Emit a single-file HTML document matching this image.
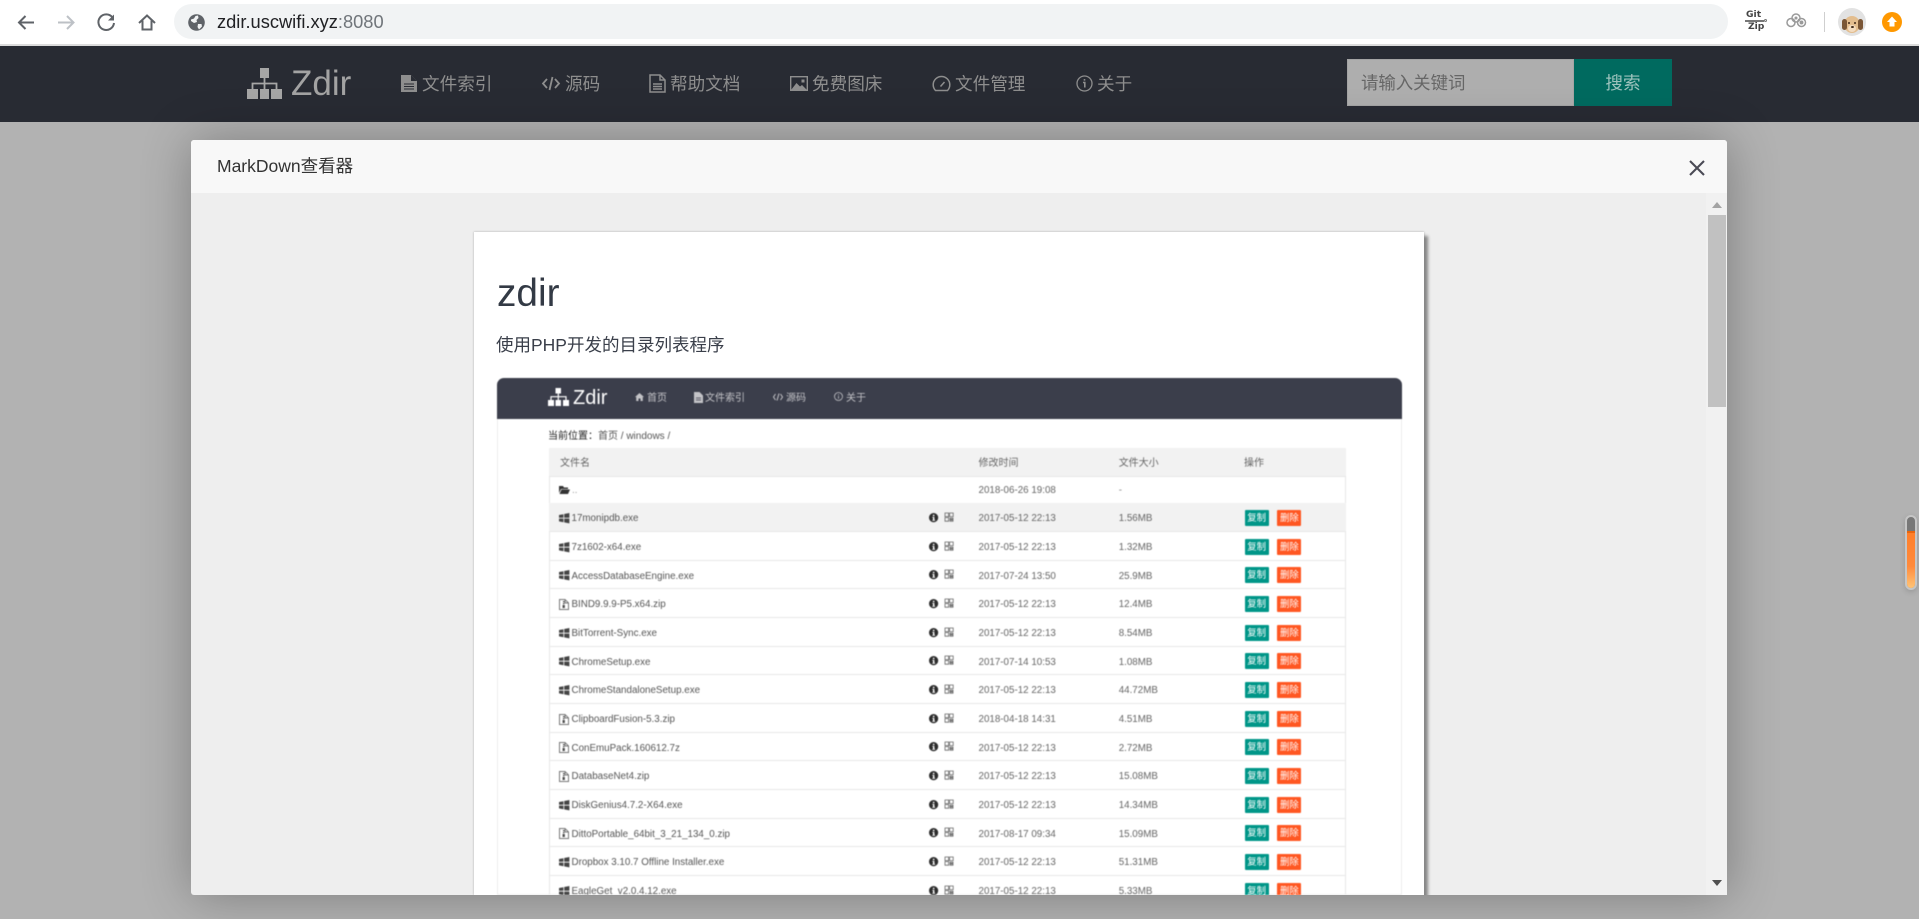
<!DOCTYPE html>
<html lang="zh"><head><meta charset="utf-8"><title>Zdir</title>
<style>
*{box-sizing:border-box}
html,body{margin:0;padding:0;width:1919px;height:919px;overflow:hidden;background:#b2b2b2;font-family:"Liberation Sans","Noto Sans CJK SC",sans-serif}
.a,.a>*{position:absolute}
.a{left:0;top:0}
svg{position:absolute;overflow:visible}
.nt{position:absolute;top:71px;line-height:26px;font-size:17.6px;color:#8e8e8e;white-space:nowrap}
.in{position:absolute;top:390px;line-height:18px;font-size:10px;color:#c3c3c7;white-space:nowrap}
.th{position:absolute;top:455px;line-height:18px;font-size:10px;color:#666;white-space:nowrap}
.r{position:absolute;left:549px;width:797px;height:28.66px;border-bottom:1px solid #e8e8e8;font-size:9.8px;line-height:28.6px;color:#666;white-space:nowrap}
.r>span{position:absolute;top:2px;font-weight:normal}
.r>b{position:absolute;font-weight:normal}
.r>svg{top:9.5px}
.n{left:22.5px;color:#555}
.t{left:429.5px}
.s{left:569.7px}
.r>.c,.r>.d{top:6.5px;width:24px;height:16px;line-height:15px;text-align:center;color:#fff;font-size:9.4px;border-radius:1px}
.r>.c{left:695.7px;background:#009688}
.r>.d{left:728.4px;background:#ff5722}
</style></head>
<body>
<svg width="0" height="0" style="position:absolute"><defs>
<g id="w"><path d="M0 2 4.400 1.200V4.800H0ZM5.200 1 10.400 0V4.800H5.200ZM0 5.600H4.400V9.200L0 8.400ZM5.200 5.600H10.400V10.400L5.200 9.400Z" fill="#444"/></g>
<g id="z"><path d="M.5.5H6L9.500 4V10.500H.5Z" fill="#fff" stroke="#777"/><path d="M6 .5V4H9.500" fill="none" stroke="#777"/><path d="M4 2h1.400v1.200H4zM4 4h1.400v1.200H4zM3.600 6h2.200v3H3.600z" fill="#444"/></g>
<g id="i"><circle cx="4.600" cy="4.600" r="4.600" fill="#2c2c2c"/><path d="M3.900 1.800h1.500v1.400H3.900zM3.300 4h2.100v2.900h.7V7.700H3.300V6.900h.7V4.800h-.7z" fill="#fff"/></g>
<g id="q"><path d="M0 0h3.600v3.600H0zM4.600 0h3.600v3.600H4.600zM0 4.600h3.600v3.600H0zM5 5h3v1.200H5zM5 7h3v1.200H5z" fill="none" stroke="#666" stroke-width=".8"/></g>
</defs></svg>

<!-- browser chrome -->
<div class="a" style="width:1919px;height:46px;background:#fff;border-bottom:2px solid #dcdcdc">
  <svg style="left:0;top:0" width="180" height="44" fill="none">
    <path d="M34 22.500H19.500M25.500 16 19 22.500 25.500 29" stroke="#5f6368" stroke-width="2"/>
    <path d="M58 22.500H73M67 16 73.500 22.500 67 29" stroke="#bdc1c6" stroke-width="2"/>
    <path d="M112.500 17.500A7.800 7.800 0 1 0 114 23" stroke="#5f6368" stroke-width="2"/>
    <path d="M114 14.500V20.500H108Z" fill="#5f6368"/>
    <path d="M139 23 147 15.500 155 23M142.500 20.500V29.500H151.500V20.500" stroke="#5f6368" stroke-width="2"/>
  </svg>
  <div style="left:174px;top:4px;width:1554px;height:35px;border-radius:18px;background:#f1f3f4"></div>
  <svg style="left:188px;top:14px" width="17" height="17" viewBox="0 0 17 17"><circle cx="8.500" cy="8.500" r="8.300" fill="#5f6368"/><path d="M3 5.500 6 4.500 7.500 2 10 1.500 10.500 4 8.500 6 9 8 6 9 3 7ZM10 10 13.500 10 14 12.500 11 15.500 9.500 13Z" fill="#f1f3f4"/></svg>
  <div style="left:217px;top:9px;line-height:26px;font-size:18.3px;color:#202124;white-space:nowrap">zdir.uscwifi.xyz<span style="color:#70757a">:8080</span></div>
  <div style="left:1746px;top:10px;font-family:'DejaVu Sans',sans-serif;font-size:9.200px;line-height:10px;font-weight:bold;color:#444">Git</div>
  <div style="left:1745px;top:20px;width:19px;height:1.500px;background:#777"></div>
  <div style="left:1764px;top:19px;width:3px;height:3px;border:1px solid #777;border-radius:50%"></div>
  <div style="left:1748px;top:22px;font-family:'DejaVu Sans',sans-serif;font-size:9.200px;line-height:10px;font-weight:bold;color:#444">Zip</div>
  <svg style="left:1786px;top:13px" width="21" height="16" fill="none" stroke="#9a9a9a" stroke-width="1.500"><circle cx="5" cy="9.500" r="4"/><circle cx="10" cy="5" r="4"/><circle cx="15.500" cy="9.500" r="4"/><circle cx="15.500" cy="9.500" r="1.200" fill="#9a9a9a"/><circle cx="10" cy="5" r=".8" fill="#9a9a9a"/></svg>
  <div style="left:1824px;top:12px;width:1px;height:20px;background:#cfcfcf"></div>
  <div style="left:1838px;top:8px;width:28px;height:28px;border-radius:50%;background:#e2e2e2;overflow:hidden">
    <div style="position:absolute;left:6px;top:8px;width:16px;height:17px;border-radius:50%;background:#e3bd8e"></div>
    <div style="position:absolute;left:3.500px;top:11px;width:5px;height:11px;border-radius:3px;background:#7a5636"></div>
    <div style="position:absolute;left:19.500px;top:11px;width:5px;height:11px;border-radius:3px;background:#7a5636"></div>
    <div style="position:absolute;left:10px;top:17px;width:8px;height:7px;border-radius:50%;background:#f3dcc0"></div>
    <div style="position:absolute;left:12.500px;top:17.500px;width:3px;height:2.200px;border-radius:50%;background:#402a1a"></div>
    <div style="position:absolute;left:10px;top:13.500px;width:2px;height:2px;background:#402a1a;border-radius:50%"></div>
    <div style="position:absolute;left:16px;top:13.500px;width:2px;height:2px;background:#402a1a;border-radius:50%"></div>
  </div>
  <svg style="left:1882px;top:12px" width="20" height="20"><circle cx="10" cy="10" r="10" fill="#ff9800"/><path d="M10 4.500 15 10H12.500V14.500H7.500V10H5Z" fill="#fff"/></svg>
</div>

<!-- navbar -->
<div class="a" style="top:46px;width:1919px;height:76px;background:#282b33"></div>
<svg style="left:246px;top:68px" width="37" height="32"><path d="M14 0h9v10h-9zM1 21h11v10H1zM14 21h9v10h-9zM25 21h11v10H25z" fill="#a6a6a6"/><path d="M18.500 10V21M6.500 21V15.500H30.500V21" fill="none" stroke="#a6a6a6" stroke-width="1.800"/></svg>
<div style="position:absolute;left:291px;top:64px;line-height:40px;font-size:35px;color:#a3a3a3">Zdir</div>

<svg style="left:401px;top:74px" width="17" height="19"><path d="M0 1h10l6 6v11H0Z" fill="#8e8e8e"/><path d="M3 10h10M3 12.500h10M3 15h10" stroke="#282b33"/><path d="M10 1V7h6" fill="#282b33"/></svg>
<div class="nt" style="left:422px">文件索引</div>
<svg style="left:542px;top:76px" width="18" height="15" fill="none" stroke="#8e8e8e" stroke-width="1.800"><path d="M5 3 1 7.500 5 12M13 3 17 7.500 13 12M10.500 1 7.500 14"/></svg>
<div class="nt" style="left:565px">源码</div>
<svg style="left:649px;top:74px" width="17" height="19" fill="none" stroke="#8e8e8e" stroke-width="1.500"><path d="M1 1h10l5 5v12H1ZM11 1v5h5"/><path d="M4 10h9M4 12.500h9M4 15h9"/></svg>
<div class="nt" style="left:670px">帮助文档</div>
<svg style="left:790px;top:76px" width="18" height="15"><rect x=".7" y=".7" width="16.600" height="13.600" fill="none" stroke="#8e8e8e" stroke-width="1.400"/><path d="M1 14 6.500 7 10 10.500 12 9 17 14ZM11.500 3.500h3v3h-3z" fill="#8e8e8e"/></svg>
<div class="nt" style="left:812px">免费图床</div>
<svg style="left:932px;top:75px" width="19" height="17" fill="none" stroke="#8e8e8e" stroke-width="1.500"><path d="M3.500 15.500A8.300 8.300 0 1 1 15.500 15.500ZM8.500 11.500 12.500 7"/></svg>
<div class="nt" style="left:955px">文件管理</div>
<svg style="left:1076px;top:75px" width="17" height="17" fill="none" stroke="#8e8e8e" stroke-width="1.300"><circle cx="8.500" cy="8.500" r="7.500"/><path d="M8.500 4v1.600M7 7.500h1.800v5" stroke-width="1.600"/></svg>
<div class="nt" style="left:1097px">关于</div>

<div style="position:absolute;left:1347px;top:59px;width:227px;height:47px;background:#aeaeae;border:1px solid #a4a4a4;padding-left:13px;line-height:47px;font-size:17.400px;color:#666">请输入关键词</div>
<div style="position:absolute;left:1574px;top:59px;width:98px;height:47px;background:#006a5f;line-height:49px;text-align:center;font-size:17.600px;color:#9dc3bd">搜索</div>

<!-- modal -->
<div style="position:absolute;left:191px;top:140px;width:1536px;height:755px;background:#eee;border-radius:3px;box-shadow:1px 1px 50px rgba(0,0,0,.3)"></div>
<div style="position:absolute;left:191px;top:140px;width:1536px;height:53px;background:#f8f8f8;border-radius:3px 3px 0 0;padding-left:26px;line-height:52px;font-size:17.500px;color:#333">MarkDown查看器</div>
<svg style="left:1689px;top:160px" width="16" height="16"><path d="M1 1 15 15M15 1 1 15" stroke="#4a4a55" stroke-width="2.100"/></svg>

<div style="position:absolute;left:0;top:0;width:1919px;height:895px;overflow:hidden;pointer-events:none">
  <div style="position:absolute;left:474px;top:232px;width:950px;height:663px;background:#fff;box-shadow:4px 4px 3px #888,0 0 2px #aaa"></div>
  <div style="position:absolute;left:497px;top:270px;line-height:48px;font-size:38.800px;color:#333a45">zdir</div>
  <div style="position:absolute;left:496px;top:332px;line-height:26px;font-size:17.500px;color:#3a3f4a;white-space:nowrap">使用PHP开发的目录列表程序</div>

  <div style="position:absolute;left:0;top:0;width:1919px;height:895px;filter:blur(.4px)">
    <div style="position:absolute;left:497px;top:418px;width:905px;height:477px;border:1px solid #ececec;border-top:0"></div>
    <div style="position:absolute;left:497px;top:378px;width:905px;height:41px;background:#3b3e4b;border-radius:7px 7px 0 0"></div>
    <svg style="left:548px;top:388px" width="21" height="18"><path d="M7.500 0h5.500v5.500H7.500zM0 12h6v6H0zM7.500 12H13v6H7.500zM15 12h6v6h-6z" fill="#fff"/><path d="M10.300 5.500V12M3 12V8.700H18V12" fill="none" stroke="#fff" stroke-width="1.200"/></svg>
    <div style="position:absolute;left:573px;top:385px;line-height:26px;font-size:20px;color:#fff">Zdir</div>

    <svg style="left:635px;top:393px" width="9" height="8"><path d="M0 4 4.500 0 9 4H7.800V8H5.500V5.500H3.500V8H1.200V4Z" fill="#c3c3c7"/></svg>
    <div class="in" style="left:647px">首页</div>
    <svg style="left:694px;top:392px" width="9" height="11"><path d="M0 0h5.500L9 3.500V11H0Z" fill="#c3c3c7"/><path d="M2 6h5M2 8h5" stroke="#3b3e4b" stroke-width=".8"/></svg>
    <div class="in" style="left:705px">文件索引</div>
    <svg style="left:773px;top:393px" width="10" height="8" fill="none" stroke="#c3c3c7" stroke-width="1"><path d="M2.500 1 .5 4 2.500 7M7.500 1 9.500 4 7.500 7M6 .5 4 7.500"/></svg>
    <div class="in" style="left:786px">源码</div>
    <svg style="left:834px;top:392px" width="9" height="9" fill="none" stroke="#c3c3c7" stroke-width=".8"><circle cx="4.500" cy="4.500" r="4"/><path d="M4.500 2.200v1M4.500 4v2.800"/></svg>
    <div class="in" style="left:846px">关于</div>

    <div style="position:absolute;left:548px;top:428px;line-height:18px;font-size:10px;color:#555;white-space:nowrap"><span style="color:#222">当前位置：</span>首页 / windows /</div>

    <div style="position:absolute;left:549px;top:448px;width:797px;height:447px;border:1px solid #e8e8e8;border-bottom:0"></div>
    <div style="position:absolute;left:549px;top:448px;width:797px;height:29px;background:#f2f2f2;border-bottom:1px solid #e6e6e6"></div>
    <div class="th" style="left:560px">文件名</div>
    <div class="th" style="left:978.500px">修改时间</div>
    <div class="th" style="left:1118.700px">文件大小</div>
    <div class="th" style="left:1244px">操作</div>

    <div class="r" style="top:477px;height:26.500px;line-height:24.500px">
      <svg style="left:10px;top:8px" width="11" height="9"><path d="M0 1h4l1 1.500h4V4H2L0 8ZM2.500 4.500H11L9 9H.5Z" fill="#333"/></svg>
      <span style="left:23px;color:#999">..</span><span class="t">2018-06-26 19:08</span><span class="s" style="color:#888">-</span>
    </div>

    <div class="r" style="top:503.400px;background:#f2f2f2"><svg style="left:10px" width="11" height="11"><use href="#w"/></svg><span class="n">17monipdb.exe</span><svg style="left:380px" width="10" height="10"><use href="#i"/></svg><svg style="left:396px" width="9" height="9"><use href="#q"/></svg><span class="t">2017-05-12 22:13</span><span class="s">1.56MB</span><b class="c">复制</b><b class="d">删除</b></div>
    <div class="r" style="top:532.100px"><svg style="left:10px" width="11" height="11"><use href="#w"/></svg><span class="n">7z1602-x64.exe</span><svg style="left:380px" width="10" height="10"><use href="#i"/></svg><svg style="left:396px" width="9" height="9"><use href="#q"/></svg><span class="t">2017-05-12 22:13</span><span class="s">1.32MB</span><b class="c">复制</b><b class="d">删除</b></div>
    <div class="r" style="top:560.700px"><svg style="left:10px" width="11" height="11"><use href="#w"/></svg><span class="n">AccessDatabaseEngine.exe</span><svg style="left:380px" width="10" height="10"><use href="#i"/></svg><svg style="left:396px" width="9" height="9"><use href="#q"/></svg><span class="t">2017-07-24 13:50</span><span class="s">25.9MB</span><b class="c">复制</b><b class="d">删除</b></div>
    <div class="r" style="top:589.400px"><svg style="left:10px" width="10" height="11"><use href="#z"/></svg><span class="n">BIND9.9.9-P5.x64.zip</span><svg style="left:380px" width="10" height="10"><use href="#i"/></svg><svg style="left:396px" width="9" height="9"><use href="#q"/></svg><span class="t">2017-05-12 22:13</span><span class="s">12.4MB</span><b class="c">复制</b><b class="d">删除</b></div>
    <div class="r" style="top:618px"><svg style="left:10px" width="11" height="11"><use href="#w"/></svg><span class="n">BitTorrent-Sync.exe</span><svg style="left:380px" width="10" height="10"><use href="#i"/></svg><svg style="left:396px" width="9" height="9"><use href="#q"/></svg><span class="t">2017-05-12 22:13</span><span class="s">8.54MB</span><b class="c">复制</b><b class="d">删除</b></div>
    <div class="r" style="top:646.700px"><svg style="left:10px" width="11" height="11"><use href="#w"/></svg><span class="n">ChromeSetup.exe</span><svg style="left:380px" width="10" height="10"><use href="#i"/></svg><svg style="left:396px" width="9" height="9"><use href="#q"/></svg><span class="t">2017-07-14 10:53</span><span class="s">1.08MB</span><b class="c">复制</b><b class="d">删除</b></div>
    <div class="r" style="top:675.400px"><svg style="left:10px" width="11" height="11"><use href="#w"/></svg><span class="n">ChromeStandaloneSetup.exe</span><svg style="left:380px" width="10" height="10"><use href="#i"/></svg><svg style="left:396px" width="9" height="9"><use href="#q"/></svg><span class="t">2017-05-12 22:13</span><span class="s">44.72MB</span><b class="c">复制</b><b class="d">删除</b></div>
    <div class="r" style="top:704px"><svg style="left:10px" width="10" height="11"><use href="#z"/></svg><span class="n">ClipboardFusion-5.3.zip</span><svg style="left:380px" width="10" height="10"><use href="#i"/></svg><svg style="left:396px" width="9" height="9"><use href="#q"/></svg><span class="t">2018-04-18 14:31</span><span class="s">4.51MB</span><b class="c">复制</b><b class="d">删除</b></div>
    <div class="r" style="top:732.700px"><svg style="left:10px" width="10" height="11"><use href="#z"/></svg><span class="n">ConEmuPack.160612.7z</span><svg style="left:380px" width="10" height="10"><use href="#i"/></svg><svg style="left:396px" width="9" height="9"><use href="#q"/></svg><span class="t">2017-05-12 22:13</span><span class="s">2.72MB</span><b class="c">复制</b><b class="d">删除</b></div>
    <div class="r" style="top:761.300px"><svg style="left:10px" width="10" height="11"><use href="#z"/></svg><span class="n">DatabaseNet4.zip</span><svg style="left:380px" width="10" height="10"><use href="#i"/></svg><svg style="left:396px" width="9" height="9"><use href="#q"/></svg><span class="t">2017-05-12 22:13</span><span class="s">15.08MB</span><b class="c">复制</b><b class="d">删除</b></div>
    <div class="r" style="top:790px"><svg style="left:10px" width="11" height="11"><use href="#w"/></svg><span class="n">DiskGenius4.7.2-X64.exe</span><svg style="left:380px" width="10" height="10"><use href="#i"/></svg><svg style="left:396px" width="9" height="9"><use href="#q"/></svg><span class="t">2017-05-12 22:13</span><span class="s">14.34MB</span><b class="c">复制</b><b class="d">删除</b></div>
    <div class="r" style="top:818.700px"><svg style="left:10px" width="10" height="11"><use href="#z"/></svg><span class="n">DittoPortable_64bit_3_21_134_0.zip</span><svg style="left:380px" width="10" height="10"><use href="#i"/></svg><svg style="left:396px" width="9" height="9"><use href="#q"/></svg><span class="t">2017-08-17 09:34</span><span class="s">15.09MB</span><b class="c">复制</b><b class="d">删除</b></div>
    <div class="r" style="top:847.300px"><svg style="left:10px" width="11" height="11"><use href="#w"/></svg><span class="n">Dropbox 3.10.7 Offline Installer.exe</span><svg style="left:380px" width="10" height="10"><use href="#i"/></svg><svg style="left:396px" width="9" height="9"><use href="#q"/></svg><span class="t">2017-05-12 22:13</span><span class="s">51.31MB</span><b class="c">复制</b><b class="d">删除</b></div>
    <div class="r" style="top:876px;height:19px;border-bottom:0;overflow:hidden"><svg style="left:10px" width="11" height="11"><use href="#w"/></svg><span class="n">EagleGet_v2.0.4.12.exe</span><svg style="left:380px" width="10" height="10"><use href="#i"/></svg><svg style="left:396px" width="9" height="9"><use href="#q"/></svg><span class="t">2017-05-12 22:13</span><span class="s">5.33MB</span><b class="c">复制</b><b class="d">删除</b></div>
  </div>
</div>

<!-- modal scrollbar -->
<div style="position:absolute;left:1706px;top:193px;width:21px;height:702px;background:#f1f1f1"></div>
<div style="position:absolute;left:1708px;top:215px;width:17.500px;height:192px;background:#c1c1c1"></div>
<svg style="left:1712px;top:202px" width="10" height="6"><path d="M0 6 5 0 10 6Z" fill="#a3a3a3"/></svg>
<svg style="left:1712px;top:880px" width="10" height="6"><path d="M0 0H10L5 6Z" fill="#505050"/></svg>

<!-- floating scroll widget -->
<div style="position:absolute;left:1905px;top:515px;width:12px;height:75px;border-radius:6px;border:2px solid #c6c6c6;overflow:hidden;background:#777;box-shadow:0 2px 6px rgba(0,0,0,.15)">
  <div style="position:absolute;left:0;top:14px;width:100%;height:57px;background:linear-gradient(#ff7f2a 0,#ff8a3c 60%,#ffc477 100%);border-top:2px solid #e8650f"></div>
</div>
</body></html>
